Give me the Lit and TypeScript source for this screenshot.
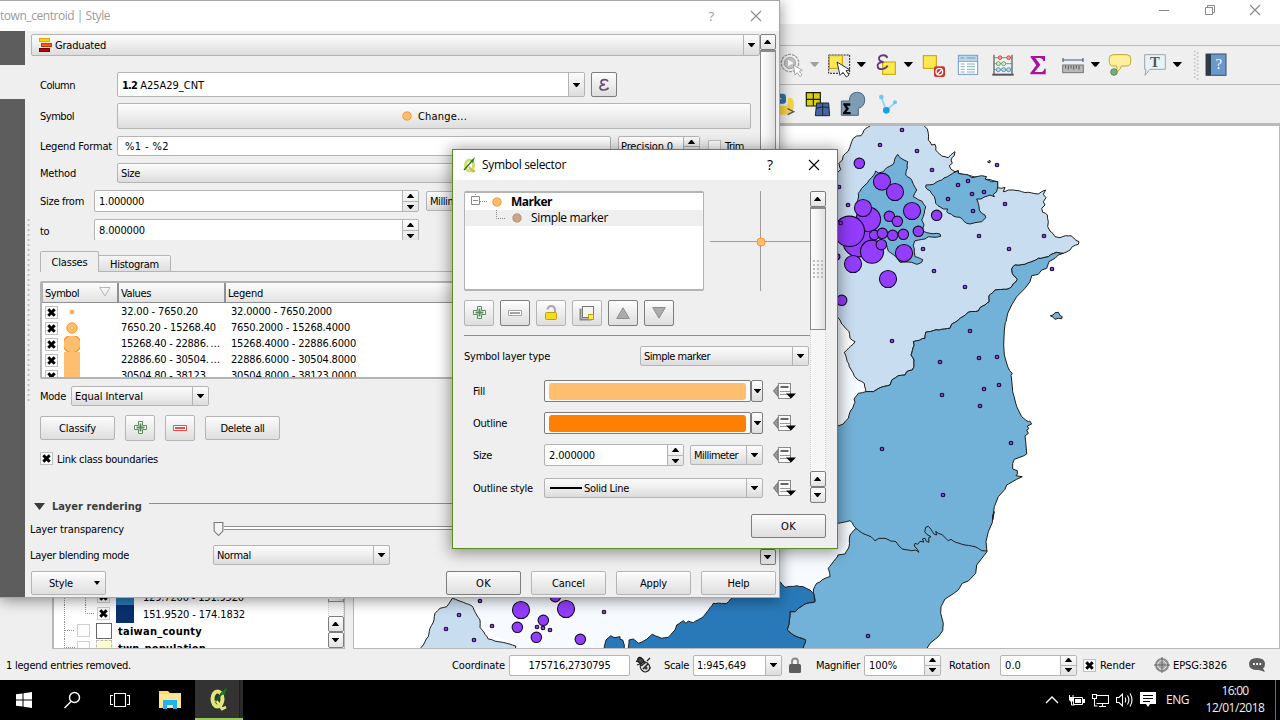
import { LitElement, html, svg, css } from "lit";
import { customElement, property } from "lit/decorators.js";

/* ---------- text that is spaced to a given width ---------- */

@customElement("fit-text")
class FitText extends LitElement {
  @property({ type: Number }) w = 0;
  static styles = css`
    :host { display: inline-block; white-space: pre; flex: none; }
  `;
  render() {
    return html`<slot></slot>`;
  }
  firstUpdated() {
    const n = (this.textContent || "").length;
    if (!this.w || !n) return;
    const r = document.createRange();
    r.selectNodeContents(this);
    const now = r.getBoundingClientRect().width;
    this.style.letterSpacing = ((this.w - now) / n).toFixed(3) + "px";
  }
}

const T = (text: string, w = 0, cls = "") => html`<fit-text class=${cls} .w=${w}>${text}</fit-text>`;

/* ---------- shared look of the controls ---------- */

const shared = css`
  * { box-sizing: border-box; }
  :host { display: block; font: 11px/14px "DejaVu Sans Condensed", "DejaVu Sans", sans-serif; font-stretch: condensed; color: #000; }
  svg { display: block; flex: none; }
  fit-text { padding-top: 2px; }
  .seg fit-text, .flat fit-text { padding-top: 0; }
  .seg { font-family: "Open Sans", "Noto Sans", sans-serif; font-stretch: normal; font-size: 12px; line-height: 16px; }
  .row { display: flex; align-items: center; flex: none; }
  .grow { flex: 1; }
  .btn { display: flex; align-items: center; justify-content: center; flex: none; border: 1px solid #b4b4b4; border-radius: 2px; background: linear-gradient(#fdfdfd, #f0f0f0 40%, #dedede); }
  .dark { border-color: #7d7d7d; }
  .push { width: 75px; height: 24px; }
  .tool { width: 30px; height: 26px; }
  .combo { display: flex; align-items: center; flex: none; height: 21px; border: 1px solid #b4b4b4; border-radius: 2px; background: linear-gradient(#fbfbfb, #efefef 45%, #dcdcdc); padding-left: 3px; }
  .combo.white { background: #fff; }
  .combo.white .drop { background: linear-gradient(#fbfbfb, #efefef 45%, #dcdcdc); }
  .drop { width: 16px; align-self: stretch; margin-left: auto; border-left: 1px solid #b4b4b4; display: flex; align-items: center; justify-content: center; }
  .field { display: flex; align-items: center; flex: none; height: 21px; border: 1px solid #b4b4b4; border-radius: 2px; background: #fff; padding-left: 4px; }
  .updown { width: 16px; align-self: stretch; margin-left: auto; border-left: 1px solid #b4b4b4; display: grid; grid-template-rows: 1fr 1fr; background: linear-gradient(#fbfbfb, #e4e4e4); }
  .updown span { display: flex; align-items: center; justify-content: center; }
  .updown span + span { border-top: 1px solid #b4b4b4; }
  .check { width: 13px; height: 13px; border: 1px solid #c0c0c0; background: #fdfdfd; flex: none; display: flex; align-items: center; justify-content: center; }
  .sb { width: 16px; display: flex; flex-direction: column; flex: none; }
  .sbb { width: 16px; height: 16px; border: 1px solid #7d7d7d; border-radius: 2px; background: linear-gradient(#fdfdfd, #e2e2e2); display: flex; align-items: center; padding-left: 3px; flex: none; }
  .sbt { border: 1px solid #8a8a8a; border-top-width: 2px; background: linear-gradient(90deg, #fdfdfd, #f2f2f2 50%, #e0e0e0); display: flex; align-items: center; justify-content: center; }
  .track { flex: 1; border: 1px dotted #cfcfcf; border-width: 0 1px; background: #f6f6f6; }
`;

const down = html`<svg width="7" height="4" viewBox="0 0 7 4"><path d="M-.3 0H7.300L4 4H3Z" /></svg>`;
const up = html`<svg width="7" height="4" viewBox="0 0 7 4"><path d="M-.3 4H7.300L4 0H3Z" /></svg>`;
const updown = html`<div class="updown"><span>${up}</span><span>${down}</span></div>`;
const drop = html`<div class="drop">${down}</div>`;
const cross = html`<svg width="9" height="9" viewBox="0 0 9 9"><path d="M1.3 1.3L7.7 7.7M7.7 1.3L1.3 7.7" stroke="#000" stroke-width="3" /></svg>`;
const check = (on: boolean) => html`<span class="check">${on ? cross : ""}</span>`;
const plusIcon = html`<svg width="16" height="16" viewBox="0 0 16 16"><path d="M6.500 1.500h4v4h4v4h-4v4h-4v-4h-4v-4h4z" fill="#fff" stroke="#5a8c5a" /><path d="M8.500 3.500v8M4.500 7.500h8" stroke="#5a8c5a" stroke-width="2" /></svg>`;
const minusIcon = (c: string) => html`<svg width="16" height="16" viewBox="0 0 16 16"><path d="M1.500 5.500h13v5h-13z" fill="#fff" stroke=${c} /><path d="M3 8h10" stroke=${c} stroke-width="2" /></svg>`;
const dot = (r: number, fill = "#fdbe6f", stroke = "#ff9428") =>
  html`<svg width="16" height="16" viewBox="0 0 16 16"><circle cx="8" cy="8" r=${r} fill=${fill} stroke=${stroke} /></svg>`;
const closeX = (c: string) => html`<svg width="12" height="12" viewBox="0 0 12 12"><path d="M1 1L11 11M11 1L1 11" stroke=${c} stroke-width="1.1" /></svg>`;

/* ---------- map ---------- */

type Pt = [number, number];
/* a traced run of points, three units to the pixel, from the origin (ox, oy) */
const run = (ox: number, oy: number, s: string): Pt[] =>
  s.trim().split(/\s+/).map((p) => {
    const [a, b] = p.split(",").map(Number);
    return [ox + a / 3, oy + b / 3] as Pt;
  });
const A = (s: string) => run(825, 125, s);
const B = (s: string) => run(825, 320, s);
const C = (s: string) => run(825, 500, s);
const D = (s: string) => run(420, 540, s);

/* breaks long edges up so that borders look surveyed, not ruled; depends on place only */
const noise = (x: number, y: number) => {
  const v = Math.sin(x * 12.9898 + y * 78.233) * 43758.5453;
  return v - Math.floor(v) - 0.5;
};
const rough = (pts: Pt[], amp: number): Pt[] => {
  const out: Pt[] = [];
  pts.forEach((p, i) => {
    out.push(p);
    const q = pts[i + 1];
    if (!q) return;
    const len = Math.hypot(q[0] - p[0], q[1] - p[1]);
    const n = Math.floor(len / 2.6);
    for (let k = 1; k < n; k++) {
      const x = p[0] + ((q[0] - p[0]) * k) / n;
      const y = p[1] + ((q[1] - p[1]) * k) / n;
      const kx = Math.round(x * 10), ky = Math.round(y * 10);
      out.push([x + noise(kx, ky) * amp, y + noise(ky, kx) * amp]);
    }
  });
  return out;
};
const str = (p: Pt[]) => p.map(([x, y]) => x.toFixed(1) + "," + y.toFixed(1)).join(" ");

const newTaipei = [
  ...rough(A("0,140 38,142 47,134 42,115 52,105 55,92 70,78 74,68 80,50 85,40 95,33 108,32 118,14 128,7 135,3 135,-6 298,-6 298,3 307,12 310,25 310,45 320,60 330,58 333,68 332,75 350,93 370,98 377,90 390,80 388,92 378,105 382,115 373,122 378,133 390,140 400,137 400,145 518,170 518,188 530,190 540,187 535,200 550,195 565,195 590,200 610,202 640,207 650,200 662,195 655,208 663,218 655,230 660,240 650,250 653,262 667,270 670,290 668,305 675,318 690,335 705,338 722,332 738,332 752,345 762,350 760,358 742,365 735,375 715,385"), 1),
  ...rough(A("715,385 695,382 670,395 660,397 640,400 625,408 600,418 570,420 560,432 562,445 577,463 560,485 545,493 510,495 492,512 493,530 480,540 465,548 460,558 430,562 400,585 392,591"), 1.2),
  ...rough(B("392,6 380,12 375,25 350,28 302,37 300,55 265,65 268,75 258,105 267,120 267,140 262,150 245,155 240,165 220,167 200,180 195,195 165,203 145,215 122,215 118,190 92,173 73,140 58,97 90,65 75,55 72,35 50,12 45,0 38,-8 0,-8"), 1.1),
];
const hualien = [
  ...A("715,385 700,390 690,400 672,410 665,430 650,435 640,448 620,452 615,470 600,490 575,515 560,540 548,565 543,590"),
  ...B("541,8 538,30 536,75 538,105 548,140 554,152 562,160 558,166 560,180 563,215 575,260 590,290 602,300 610,305 614,303 620,312 607,318 611,326 605,330 610,340 600,348 602,365 605,402 595,408 568,418 563,430 563,447 577,452 577,462 573,467 592,470 575,478 545,495 540,508 520,530 508,560 503,600"),
  ...C("508,35 503,45 502,68 490,95 483,125 486,155 455,195 452,220 430,243 412,250 400,270 385,281 360,297 348,320 347,340 355,370 353,392 340,410 315,430 303,450"),
  ...D("1150,340"),
  ...rough(D("1150,324 1157,300 1130,290 1102,270 1108,240 1110,215 1125,215 1135,205 1160,190 1185,185 1180,150 1190,130 1215,115 1230,110 1225,85 1240,65 1254,48"), 0.9),
  ...rough(C("38,165 60,162 72,140 75,105 93,85 75,62 38,70 0,60"), 0.9),
  ...rough(B("0,318 38,318 55,312 70,295 78,270 90,247 87,237 100,220 122,215 145,215 165,203 195,195 200,180 220,167 240,165 245,155 262,150 267,140 267,120 258,105 268,75 265,65 300,55 302,37 350,28 375,25 380,12 392,6"), 1.1),
  ...rough(A("392,591 400,585 430,562 460,558 465,548 480,540 493,530 492,512 510,495 545,493 560,485 577,463 562,445 560,432 570,420 600,418 625,408 640,400 660,397 670,395 695,382 715,385"), 1.2),
];
const divider = rough(C("93,85 110,98 125,105 138,110 150,122 162,115 180,115 197,123 213,125 222,138 232,147 243,149 260,152 272,150 282,157 277,148 268,138 270,130 278,133 285,124 297,126 292,117 300,115 304,124 312,127 311,113 318,110 305,103 299,95 302,82 310,79 318,88 328,103 335,105 332,94 340,100 352,104 370,122 378,118 392,127 420,135 450,140 470,152 486,153"), 0.4);
const keelung = rough(A("400,137 400,145 418,148 430,150 440,158 470,152 485,155 480,162 500,170 518,170 518,185 515,200 505,208 508,215 495,210 480,215 468,222 455,222 460,235 463,255 470,265 480,270 482,278 470,290 450,293 435,297 425,295 405,277 385,273 365,260 368,252 355,252 332,235 328,215 315,197 302,187 303,180 325,178 350,165 375,150 400,137"), 1);
const taipei = rough(A("218,88 228,100 248,110 247,130 242,150 260,165 265,178 275,195 265,215 290,228 302,245 298,265 290,285 297,300 293,318 315,325 345,327 347,334 330,337 310,335 300,342 270,347 265,362 268,380 270,395 293,404 290,412 275,418 260,412 225,412 218,402 190,378 185,360 150,330 130,300 125,260 98,235 100,205 110,190 120,180 145,152 152,138 160,144 175,140 185,128 205,118 210,100 218,88"), 1.1);
const west = rough(D("97,175 130,187 155,197 170,225 180,240 180,262 205,297 235,305 260,310 287,318 288,340 -10,340 4,322 15,305 25,290 30,265 42,240 45,220 60,205 80,200 97,175"), 0.7);
const taichung = [
  ...rough(D("625,340 625,325 627,300 640,297 655,310 680,298 697,283 725,295 745,292 765,270 770,255 790,242 798,250 805,243 820,248 850,230 880,190 920,190 940,170 1000,130 1080,125 1095,142 1130,137 1150,140 1170,150 1182,162 1185,185"), 0.7),
  ...rough(D("1185,185 1160,190 1135,205 1125,215 1110,215 1108,240 1102,270 1130,290 1157,300 1150,324"), 0.9),
  ...D("1150,340"),
];
const blob = D("553,340 553,320 558,300 572,287 582,293 600,290 600,298 608,300 613,315 612,340");
const islet = A("676,572 684,570 690,563 700,562 706,572 712,575 710,581 700,580 690,583 685,577");
const land = [...D("97,175 180,262 288,318 288,345"), ...D("1160,345 1200,130"), ...C("93,85"), ...B("130,215 60,90 40,-8"), ...D("100,0")];

const towns = [
  ...A("231,15 165,60 276,78 321,135 42,186 69,240 516,120 429,168 399,180 441,207 477,201 369,222 444,258 540,237 462,333 657,333 552,372 294,372 327,438 420,486 681,432"),
  ...B("201,63 435,33 345,126 462,114 516,111 522,195 477,207 351,225 465,258 558,369 171,387 354,525"),
  ...C("129,408"),
  ...D("180,183 117,225 78,267 216,258 162,300 552,216 351,261 369,264 390,270"),
];
/* x, y, radius */
const cities: number[][] = [
  [103, 115, 16], [100, 350, 46], [130, 283, 37], [148, 330, 15], [171, 170, 26], [210, 201, 26], [73, 319, 46], [114, 249, 26],
  [261, 258, 26], [335, 271, 16], [193, 274, 16], [217, 289, 16], [172, 325, 16], [203, 331, 16], [235, 328, 16], [280, 319, 16],
  [141, 380, 35], [169, 359, 16], [237, 384, 26], [84, 417, 26], [189, 462, 26], [50, 526, 16], [36, 395, 9], [47, 294, 5.5],
].map(([x, y, r]) => [825 + x / 3, 125 + y / 3, r / 3]).concat(
  [[303, 210, 26], [438, 207, 26], [406, 170, 16], [370, 241, 16], [292, 262, 16], [349, 292, 16], [481, 298, 16]].map(([x, y, r]) => [420 + x / 3, 540 + y / 3, r / 3])
);

@customElement("map-canvas")
class MapCanvas extends LitElement {
  static styles = [shared, css`
    .map { border: 1px solid #b9b9b9; background: #fff; height: 524px; width: 927px; overflow: hidden; }
    .edge { stroke: #1c1c1c; stroke-width: 1; stroke-linejoin: round; }
    .pt { fill: #943cff; stroke: #140c24; stroke-width: 1.1; }
  `];
  render() {
    const poly = (p: Pt[], fill: string) => svg`<polygon class="edge" points=${str(p)} fill=${fill} />`;
    return html`<div class="map"><svg width="925" height="522" viewBox="354 126 925 522">
      <polygon points=${str(land)} fill="#f7fbff" />
      ${poly(newTaipei, "#c9ddf0")} ${poly(hualien, "#73b2d8")} ${poly(taipei, "#73b2d8")} ${poly(keelung, "#73b2d8")}
      ${poly(taichung, "#2979b9")} ${poly(west, "#c9ddf0")} ${poly(blob, "#2979b9")} ${poly(islet, "#73b2d8")}
      <polyline class="edge" points=${str(divider)} fill="none" />
      <path d="M987.500 162l1.500-1.500 1.500 0.500-1 2z" class="edge" fill="#73b2d8" />
      ${cities.map(([x, y, r]) => svg`<circle class="pt" cx=${x} cy=${y} r=${r - 0.1} />`)}
      ${towns.map(([x, y]) => svg`<circle class="pt" cx=${x} cy=${y} r="1.8" />`)}
    </svg></div>`;
  }
}

/* ---------- main window ---------- */

/* toolbar drawings share one sheet, three units to the pixel, with x counted from pixel 760 */
const sheet = (x0: number, x1: number, top: number, body: unknown) =>
  html`<svg width=${x1 - x0} height="38" viewBox="${(x0 - 760) * 3} ${top} ${(x1 - x0) * 3} 114">${body}</svg>`;
const t1 = (x0: number, x1: number, body: unknown) => sheet(x0, x1, 138, body);
const t2 = (x0: number, x1: number, body: unknown) => sheet(x0, x1, 255, body);
const tri = (x: number, c = "#000") => svg`<path d="M${x - 14} 186H${x + 14}L${x + 2} 200H${x - 2}Z" fill=${c} />`;

@customElement("main-window")
class MainWindow extends LitElement {
  static styles = [shared, css`
    .win { height: 680px; background: #efefef; display: flex; flex-direction: column; }
    .title { height: 24px; background: #fff; display: flex; justify-content: flex-end; padding: 4px 19px 0 0; gap: 33px; flex: none; }
    .menu { height: 22px; border-bottom: 1px solid #b9b9b9; flex: none; }
    .bar { height: 39px; border-bottom: 1px solid #b9b9b9; padding-left: 778px; display: flex; flex: none; overflow: hidden; }
    .bar2 { height: 40px; border-bottom: 2px solid #b9b9b9; }
    .serif { font: bold 38px "Liberation Serif", serif; }
    .tee { font-size: 44px; }
    .quest { font-size: 44px; font-weight: normal; }
    .work { display: flex; flex: none; height: 525px; }
    .left { width: 293px; margin-left: 52px; height: 524px; border: 1px solid #b9b9b9; border-left: 2px solid #b9b9b9; background: #fff; display: flex; overflow: hidden; }
    .tree { flex: 1; padding-top: 462px; height: 522px; overflow: hidden; }
    .leaf { display: flex; align-items: center; height: 17px; flex: none; }
    .leaf .check { border-color: #d0d0d0; }
    .b { font-weight: bold; }
    .sw { width: 18px; height: 18px; margin: 0 9px 0 6px; flex: none; border-top: 1px solid #08306b; }
    .s1 { background: #2979b9; } .s2 { background: #08306b; }
    .sw2 { width: 16px; height: 16px; margin: 0 6px; flex: none; border: 1px solid #666; background: #fff; }
    .sw3 { background: #ffffcc; border: 1px dashed #bbb; }
    .side { padding-top: 473px; height: 522px; }
    .side .sbt { height: 3px; flex: none; border-top: 0; }
    .map { margin-left: 8px; }
    .status { flex: none; height: 30px; padding-left: 6px; display: grid; align-items: center; grid-template-columns: 446px 57px 126px 29px 29px 96px 27px 48px 85px 51px 83px 17px 54px 19px 76px 31px; }
    .w121 { width: 121px; justify-content: center; padding: 0; } .w90 { width: 89px; } .w78 { width: 77px; }
  `];
  render() {
    const line = (p: string, w = 25) => html`<svg width=${w} height="17" viewBox="0 0 ${w} 17"><path d=${p} stroke="#8f8f8f" stroke-dasharray="1 1" fill="none" /></svg>`;
    return html`<div class="win">
      <div class="title">
        <svg width="14" height="12" viewBox="0 0 14 12"><path d="M2 6.500h10" stroke="#888" /></svg>
        <svg width="12" height="12" viewBox="0 0 12 12"><path d="M1.500 3.500h7v7h-7zM3.500 3.500v-2h7v7h-2" stroke="#888" fill="none" /></svg>
        ${closeX("#888")}
      </div>
      <div class="menu"></div>
      <div class="bar">
        ${t1(778, 806, svg`<circle cx="90" cy="189" r="26" fill="#f5f5f5" stroke="#999" stroke-width="4" stroke-dasharray="9 2.600" /><circle cx="90" cy="189" r="17" fill="#c4c4c4" stroke="#999" stroke-width="2.500" /><path d="M84 179v20l16-10z" fill="#fff" /><path d="M100 195l5 30 7-7 8 12 6-5-8-11 9-3z" fill="#fff" stroke="#999" stroke-width="2.500" />`)}
        ${t1(806, 824, tri(164, "#a0a0a0"))}
        ${t1(824, 852, svg`<rect x="206" y="165" width="63" height="55" fill="#e4e4e4" stroke="#222" stroke-width="3" stroke-dasharray="6 3" /><rect x="208" y="167" width="39" height="38" fill="#fce94f" stroke="#c4a000" stroke-width="3" /><path d="M231 186l9 40 9-9 10 14 8-6-9-13 12-2z" fill="#fff" stroke="#333" stroke-width="3" />`)}
        ${t1(852, 872, tri(304))}
        ${t1(872, 899, svg`<rect x="368" y="186" width="38" height="37" fill="#fce94f" stroke="#c4a000" stroke-width="3" /><path d="M382 174C379 162 357 164 357 175C357 183 364 186 371 186C358 186 351 192 353 200C356 211 376 210 383 197" stroke="#5f3a72" stroke-width="5.500" fill="none" />`)}
        ${t1(899, 919, tri(445))}
        ${t1(919, 951, svg`<rect x="490" y="167" width="39" height="38" fill="#fce94f" stroke="#c4a000" stroke-width="3" /><rect x="522" y="199" width="33" height="32" rx="6" fill="#cf3030" /><circle cx="538" cy="215" r="10" fill="none" stroke="#fff" stroke-width="4" /><path d="M532 222l13-13" stroke="#fff" stroke-width="4" />`)}
        ${t1(951, 985, svg`<rect x="595" y="166" width="58" height="57" fill="#fff" stroke="#6f9ac4" stroke-width="3" /><path d="M597 168h54v14h-54z" fill="#b8d4ee" /><path d="M596 184h56M602 174h10M620 174h26" stroke="#6f9ac4" stroke-width="3" /><path d="M602 192h12M602 200h12M602 208h12M602 216h12M621 192h24M621 200h24M621 208h24M621 216h24" stroke="#6f9ac4" stroke-width="2.500" />`)}
        ${t1(985, 1020, svg`<path d="M702 164v58M756 164v58" stroke="#666" stroke-width="4" /><path d="M697 224h64" stroke="#555" stroke-width="6" /><path d="M702 173h54M702 191h54M702 209h54" stroke="#777" stroke-width="2.500" /><g stroke-width="2.500"><g fill="#f6a0a0" stroke="#c33"><circle cx="720" cy="173" r="5.500" /><circle cx="746" cy="173" r="5.500" /></g><g fill="#c8ecc8" stroke="#5a9c5a"><circle cx="715" cy="191" r="6" /><circle cx="731" cy="191" r="6" /></g><g fill="#bcdcf2" stroke="#4a80ac"><circle cx="715" cy="209" r="6" /><circle cx="731" cy="209" r="6" /><circle cx="746" cy="209" r="6" /></g></g>`)}
        ${t1(1020, 1055, svg`<path d="M812 168H855V183H850Q848 174 838 174H826L841 194L824 216H842Q851 216 853 206H857V223H811V219L829 196L812 172Z" fill="#a8129f" />`)}
        ${t1(1055, 1086, svg`<path d="M909 180h60M909 174v12M969 174v12" stroke="#3c5f86" stroke-width="3.500" /><rect x="908" y="195" width="62" height="23" fill="#b8b8b8" stroke="#777" stroke-width="3" /><path d="M917 197v9M925 197v12M933 197v9M941 197v12M949 197v9M957 197v12" stroke="#444" stroke-width="2.500" />`)}
        ${t1(1086, 1105, tri(1006))}
        ${t1(1105, 1138, svg`<path d="M1060 164h40q12 0 12 11v10q0 13-12 13h-16q-4 16-18 18q8-10 4-18h-10q-12 0-12-13v-10q0-11 12-11z" fill="#fcf09a" stroke="#c4a52a" stroke-width="3" /><circle cx="1062" cy="216" r="10" fill="#7cab7c" stroke="#4d7f4d" stroke-width="2.500" />`)}
        ${t1(1138, 1168, svg`<path d="M1154 164h62v44h-46l-15 18 3-18h-4z" fill="#eaf2f5" stroke="#9aa6ab" stroke-width="3" /><text class="serif tee" x="1185" y="201" text-anchor="middle" fill="#555">T</text>`)}
        ${t1(1168, 1190, tri(1252))}
        ${t1(1190, 1202, svg`<path d="M1304 152V240M1313 157V240" stroke="#c4c4c4" stroke-width="5" stroke-dasharray="5 6" />`)}
        ${t1(1202, 1232, svg`<rect x="1338" y="162" width="60" height="64" fill="#6b98cb" stroke="#3b4f66" stroke-width="3" /><rect x="1338" y="162" width="15" height="64" fill="#2c3a4a" /><text class="serif quest" x="1376" y="208" text-anchor="middle" fill="#fff">?</text>`)}
      </div>
      <div class="bar bar2">
        ${t2(778, 802, svg`<path d="M54 281h14q10 0 10 10v12q0 8-8 8H54z" fill="#3572a5" /><path d="M64 296h-10" stroke="#fff" stroke-width="3" /><path d="M54 345V318h22q8-1 8-9v-16h8q10 3 10 20t-6 20l-8 10z" fill="#f9d648" /><path d="M83 326l18 9-18 9" stroke="#555" stroke-width="4" fill="none" />`)}
        ${t2(802, 836, svg`<path d="M139 278h42v40h-42zM160 278v40M139 298h42" fill="#d8cf0a" stroke="#1c1c00" stroke-width="3.500" /><path d="M170 309h36l3 38h-43z" fill="#46659e" stroke="#182440" stroke-width="3" /><path d="M188 309v38M168 325q18-8 39-2" stroke="#182440" stroke-width="3" fill="none" />`)}
        ${t2(836, 871, svg`<path d="M244 303h24q0-26 25-26 21 2 21 23 0 20-19 25v21h-51z" fill="#7e9db3" stroke="#4a6880" stroke-width="3" /><path d="M250 310H271V317H260L267 326L259 336H272V343H249V338L258 326L250 315Z" fill="#000" />`)}
        ${t2(871, 905, svg`<path d="M364 292L379 331L406 308" stroke="#8fd3f2" stroke-width="5" fill="none" /><circle cx="379" cy="331" r="10" fill="#159fe4" /><circle cx="364" cy="291" r="7" fill="#6cc7f0" /><circle cx="405" cy="307" r="6" fill="#6cc7f0" />`)}
      </div>
      <div class="work">
        <div class="left">
          <div class="tree">
            <div class="leaf">${line("M10.500 0V17")}<svg width="18" height="17"><path d="M6.500 0V17" stroke="#8f8f8f" stroke-dasharray="1 1" /></svg>${check(true)}<span class="sw s1"></span>${T("129.7200 - 151.9520", 101)}</div>
            <div class="leaf">${line("M10.500 0V17")}<svg width="18" height="17"><path d="M6.500 0V8.500H16" stroke="#8f8f8f" stroke-dasharray="1 1" fill="none" /></svg>${check(true)}<span class="sw s2"></span>${T("151.9520 - 174.1832", 102)}</div>
            <div class="leaf b">${line("M10.500 0V17M11 8.500H21", 23)}${check(false)}<span class="sw2"></span>${T("taiwan_county", 84)}</div>
            <div class="leaf b">${line("M10.500 0V8.500H21", 23)}${check(false)}<span class="sw2 sw3"></span>${T("twn_population", 88)}</div>
          </div>
          <div class="sb side"><div class="sbt"></div><div class="track"></div><div class="sbb">${up}</div><div class="sbb">${down}</div></div>
        </div>
        <map-canvas class="map"></map-canvas>
      </div>
      <div class="status">
        ${T("1 legend entries removed.", 125)} ${T("Coordinate", 53)}
        <div class="field w121">${T("175716,2730795", 82)}</div>
        <svg width="18" height="18" viewBox="0 0 18 18"><path d="M3 2l3 2M1 5l4 1M2 9l3-1M15 2l-3 3M16 12l-3-1" stroke="#222" stroke-width="1.300" /><ellipse cx="6" cy="5" rx="2.500" ry="4" transform="rotate(-40 6 5)" fill="#444" stroke="#111" /><ellipse cx="10" cy="11" rx="4.500" ry="5" fill="#ddd" stroke="#222" stroke-width="1.300" transform="rotate(-40 10 11)" /><path d="M6 10l5-4M8 13l5-5" stroke="#222" stroke-width="1.500" /><circle cx="11" cy="12" r="1.500" fill="#333" /></svg>
        ${T("Scale", 25)} <div class="combo white w90">${T("1:945,649", 49)}${drop}</div>
        <svg width="12" height="16" viewBox="0 0 12 16"><path d="M3 8V4.500q0-3 3-3t3 3V8" stroke="#888" stroke-width="1.800" fill="none" /><rect y="7" width="12" height="9" rx="1.500" fill="#5c5c5c" /></svg>
        ${T("Magnifier", 44)} <div class="field w78">${T("100%", 28)}${updown}</div>
        ${T("Rotation", 41)} <div class="field w78">${T("0.0", 16)}${updown}</div>
        ${check(true)} ${T("Render", 35)}
        <svg width="16" height="16" viewBox="0 0 16 16"><circle cx="8" cy="8" r="7" fill="#8a8a8a" /><circle cx="8" cy="8" r="4.500" fill="#aaa" stroke="#eee" /><path d="M8 0v16M0 8h16" stroke="#666" /></svg>
        ${T("EPSG:3826", 54)}
        <svg width="16" height="16" viewBox="0 0 16 16"><path d="M8 1q8 0 8 6 0 3-2 4.500l2 3.500-6-2q-10 .5-10-6 0-6 8-6z" fill="#5d5d5d" /><path d="M4 7h1.800M7.200 7H9M10.400 7h1.800" stroke="#fff" stroke-width="1.800" /></svg>
      </div>
    </div>`;
  }
}

/* ---------- layer style window ---------- */

@customElement("style-window")
class StyleWindow extends LitElement {
  static styles = [shared, css`
    .win { width: 780px; height: 598px; border: solid #a6a6a6; border-width: 1px 1px 1px 0; background: #efefef; box-shadow: 0 2px 14px rgba(0, 0, 0, 0.45); display: flex; flex-direction: column; }
    .title { height: 30px; flex: none; background: #fff; color: #9b9b9b; display: flex; align-items: center; padding-right: 17px; }
    .q { margin-right: 36px; font-size: 13px; }
    .body { flex: 1; display: flex; min-height: 0; }
    .nav { width: 25px; background: #5d5d5d; padding-top: 34px; flex: none; }
    .sel { height: 34px; background: #efefef; }
    .grip { width: 6px; padding: 188px 0 0 2px; flex: none; }
    .main { flex: 1; }
    .area { display: flex; height: 534px; padding-top: 3px; }
    .form { width: 729px; display: flex; flex-direction: column; height: 532px; }
    .in { padding-left: 9px; }
    .lab { width: 77px; flex: none; } .lab54 { width: 54px; flex: none; }
    .full { width: 729px; height: 22px; padding-left: 5px; gap: 2px; }
    .r1 { margin-top: 16px; height: 25px; } .r1 .combo { width: 468px; height: 25px; padding-left: 4px; } .eps { width: 26px; height: 25px; margin-left: 6px; }
    .r2 { margin-top: 6px; height: 26px; } .wide { width: 634px; height: 26px; gap: 3px; padding-right: 2px; }
    .r3 { margin-top: 7px; height: 20px; } .r3 .field { height: 20px; } .lf { width: 494px; padding-left: 7px; } .pr { width: 82px; margin-left: 7px; padding-left: 2px; } .trim { gap: 4px; margin-left: 8px; }
    .r4 { margin-top: 7px; height: 20px; } .wm { width: 634px; height: 20px; }
    .r5 { margin-top: 7px; height: 22px; } .spin { width: 325px; height: 22px; } .mm { width: 80px; height: 20px; margin-left: 7px; }
    .r6 { height: 21px; overflow: hidden; align-items: flex-start; }
    .r6 .lab54 { padding-top: 4px; }
    .tabs { margin: 11px 0 0 9px; height: 21px; display: flex; align-items: flex-end; flex: none; }
    .tab { border: 1px solid #b4b4b4; height: 17px; width: 72px; border-radius: 0 2px 0 0; border-left: 0; background: linear-gradient(#f6f6f6, #dedede); display: flex; align-items: center; justify-content: center; }
    .on { height: 21px; width: 59px; background: #efefef; border-left: 1px solid #b4b4b4; border-bottom: 0; border-radius: 2px 2px 0 0; }
    .rest { flex: 1; border-bottom: 1px solid #b4b4b4; align-self: stretch; }
    .table { margin: 9px 0 0 9px; height: 98px; flex: none; border: 1px solid #b4b4b4; border-width: 2px; border-radius: 2px; background: #fff; overflow: hidden; }
    .head, .rec { display: grid; grid-template-columns: 75px 107px 1fr; }
    .head { height: 20px; border-bottom: 1px solid #8f8f8f; }
    .head > div { background: linear-gradient(#fdfdfd, #e2e2e2); border-left: 2px solid #909090; display: flex; align-items: center; padding-left: 2px; }
    .head > div:first-child { border-left: 1px solid #b0b0b0; }
    .sort { margin: -3px 0 0 20px; }
    .rec { height: 16px; }
    .rec > div { display: flex; align-items: center; height: 16px; }
    .sy { gap: 6px; padding: 2px 0 0 3px; } .va { padding-left: 4px; } .le { padding-left: 7px; }
    .block { width: 16px; height: 16px; background: #fdbe6f; }
    .mode { margin-top: 7px; height: 20px; } .mode .lab { width: 31px; } .mode .combo { width: 138px; height: 20px; }
    .acts { margin-top: 9px; height: 26px; gap: 10px; }
    .link { margin-top: 10px; height: 15px; gap: 4px; }
    .sec { margin-top: 33px; height: 14px; font-weight: bold; color: #3c3c3c; }
    .sec svg { margin: 0 7px 0 3px; } .sec i { flex: 1; height: 1px; background: #8f8f8f; margin: -6px 0 0 7px; }
    .tr { margin-top: 7px; height: 18px; } .lab182 { width: 183px; margin-left: -1px; flex: none; }
    .groove { flex: 1; height: 4px; border: 1px solid #8f8f8f; border-width: 1px 0; background: #fff; margin-top: -2px; }
    .bl { margin-top: 7px; height: 20px; } .bl .combo { width: 177px; height: 20px; }
    .area .sb { height: 531px; } .area .sbt { flex: 1; border-bottom: 1px solid #8a8a8a; }
    .foot { display: flex; align-items: center; height: 24px; margin-top: 6px; gap: 10px; }
    .sty { margin-right: 330px; justify-content: flex-start; padding-left: 17px; gap: 21px; }
  `];
  render() {
    const round = html`<svg width="16" height="16" viewBox="0 0 16 16"><circle cx="8" cy="8" r="8.800" fill="#fdbe6f" stroke="#ff9428" stroke-width="1.200" /></svg>`;
    const sq = html`<span class="block"></span>`;
    const recs: [unknown, string, number, string, number][] = [
      [dot(1.8), "32.00 - 7650.20", 77, "32.0000 - 7650.2000", 101],
      [dot(5.2), "7650.20 - 15268.40", 95, "7650.2000 - 15268.4000", 119],
      [round, "15268.40 - 22886.\u2009…", 99, "15268.4000 - 22886.6000", 125],
      [sq, "22886.60 - 30504.\u2009…", 99, "22886.6000 - 30504.8000", 125],
      [sq, "30504.80 - 38123.\u2009…", 99, "30504.8000 - 38123.0000", 125],
    ];
    return html`<div class="win">
      <div class="title seg">${T("town_centroid | Style", 110)}<span class="grow"></span><span class="q">?</span>${closeX("#8c8c8c")}</div>
      <div class="body">
        <div class="nav"><div class="sel"></div></div>
        <div class="grip"><svg width="3" height="184"><path d="M1.500 0V184" stroke="#c0c0c0" stroke-width="2" stroke-dasharray="2 3" /></svg></div>
        <div class="main">
          <div class="area">
            <div class="form">
              <div class="combo full">
                <svg width="16" height="16" viewBox="0 0 16 16"><rect x="2.500" y="1.500" width="10" height="3" fill="#ffd800" stroke="#f0a000" /><rect x="4.500" y="6.500" width="10" height="3" fill="#ff5a14" stroke="#c83800" /><rect x="2.500" y="11.500" width="10" height="3" fill="#b00c00" stroke="#700" /></svg>
                ${T("Graduated", 51)}${drop}</div>
              <div class="row in r1"><span class="lab">${T("Column", 35)}</span><div class="combo white"><b>${T("1.2", 15)}</b><span>&nbsp;</span>${T("A25A29_CNT", 64)}${drop}</div>
                <div class="btn dark eps"><svg width="12" height="14" viewBox="0 0 12 14"><path d="M10 3.500C9 .8 3.500 1 3 3.800C2.800 6 5 6.600 7 6.600C4 6.600 1.800 7.700 2 9.800C2.500 12.800 9 12.700 10.500 9.700" stroke="#6a4a78" stroke-width="1.700" fill="none" /></svg></div></div>
              <div class="row in r2"><span class="lab">${T("Symbol", 34)}</span><div class="btn wide">${dot(4.1)}${T("Change...", 49)}</div></div>
              <div class="row in r3"><span class="lab">${T("Legend Format", 72)}</span><div class="field lf">${T("%1 - %2", 44)}</div><div class="field pr">${T("Precision 0", 52)}${updown}</div><span class="row trim">${check(false)}${T("Trim", 19)}</span></div>
              <div class="row in r4"><span class="lab">${T("Method", 36)}</span><div class="combo wm">${T("Size", 19)}${drop}</div></div>
              <div class="row in r5"><span class="lab54">${T("Size from", 44)}</span><div class="field spin">${T("1.000000", 45)}${updown}</div><div class="combo mm">${T("Millimeter", 45)}${drop}</div></div>
              <div class="row in r5 r6"><span class="lab54">${T("to", 9)}</span><div class="field spin">${T("8.000000", 46)}${updown}</div></div>
              <div class="tabs"><div class="tab on">${T("Classes", 36)}</div><div class="tab">${T("Histogram", 49)}</div><div class="rest"></div></div>
              <div class="table">
                <div class="head"><div>${T("Symbol", 34)}<svg class="sort" width="12" height="12" viewBox="0 0 12 12"><path d="M.5 2.500H11L6 11z" fill="none" stroke="#b8b8b8" /></svg></div><div>${T("Values", 30)}</div><div>${T("Legend", 35)}</div></div>
                ${recs.map(([s, v, vw, l, lw]) => html`<div class="rec"><div class="sy">${check(true)}${s}</div><div class="va">${T(v, vw)}</div><div class="le">${T(l, lw)}</div></div>`)}
              </div>
              <div class="row in mode"><span class="lab">${T("Mode", 26)}</span><div class="combo">${T("Equal Interval", 68)}${drop}</div></div>
              <div class="row in acts"><div class="btn push">${T("Classify", 37)}</div><div class="btn tool">${plusIcon}</div><div class="btn tool">${minusIcon("#ee4c4c")}</div><div class="btn push">${T("Delete all", 44)}</div></div>
              <div class="row in link">${check(true)}${T("Link class boundaries", 101)}</div>
              <div class="row sec"><svg width="11" height="7" viewBox="0 0 11 7"><path d="M0 0H11L5.500 7z" fill="#3c3c3c" /></svg>${T("Layer rendering", 90)}<i></i></div>
              <div class="row tr"><span class="lab182">${T("Layer transparency", 94)}</span><svg width="11" height="16" viewBox="0 0 11 16"><path d="M1.500 1.500h8v8.500l-4 4.500-4-4.500z" transform="translate(-.5 0) scale(1.090 1)" fill="#f4f4f4" stroke="#777" /></svg><div class="groove"></div></div>
              <div class="row bl"><span class="lab182">${T("Layer blending mode", 99)}</span><div class="combo">${T("Normal", 34)}${drop}</div></div>
            </div>
            <div class="sb"><div class="sbb">${up}</div><div class="sbt"></div><div class="sbb">${down}</div></div>
          </div>
          <div class="foot">
            <div class="btn push sty">${T("Style", 24)}<svg width="6" height="4" viewBox="0 0 6 4"><path d="M0 0h6L3 4z" /></svg></div>
            <div class="btn push dark">${T("OK", 15)}</div><div class="btn push">${T("Cancel", 33)}</div><div class="btn push">${T("Apply", 27)}</div><div class="btn push">${T("Help", 22)}</div>
          </div>
        </div>
      </div>
    </div>`;
  }
}

/* ---------- symbol selector window ---------- */

@customElement("symbol-window")
class SymbolWindow extends LitElement {
  static styles = [shared, css`
    .win { width: 386px; height: 400px; border: 1px solid #5a8f1f; background: #efefef; box-shadow: 0 2px 14px 2px rgba(0, 0, 0, 0.4); display: flex; flex-direction: column; }
    .title { height: 30px; flex: none; background: #fff; display: flex; align-items: center; padding: 0 17px 0 9px; gap: 5px; }
    .q { margin-right: 30px; font-size: 14px; }
    .body { display: flex; padding: 11px 0 0 11px; height: 323px; flex: none; }
    .col { width: 346px; display: flex; flex-direction: column; }
    .top { display: flex; gap: 6px; flex: none; height: 100px; }
    .tree { width: 240px; border: 1px solid #b4b4b4; border-width: 2px 1px; border-radius: 2px; background: #fff; padding-top: 1px; font-size: 12px; font-family: "Open Sans", sans-serif; font-stretch: normal; }
    .n { display: flex; align-items: center; height: 16px; }
    .n b { font-weight: bold; } .n.sel { background: #efefef; padding-left: 28px; }
    .n .mk { margin-right: 6px; }
    .tools { display: flex; gap: 6px; margin-top: 9px; height: 26px; flex: none; }
    .hr { height: 1px; background: #8f8f8f; margin-top: 9px; flex: none; }
    .ty { margin-top: 10px; height: 20px; justify-content: space-between; padding-right: 1px; } .ty .combo { width: 169px; height: 20px; }
    .f { margin-top: 14px; height: 22px; padding-left: 9px; } .f + .f { margin-top: 10px; } .f + .os { margin-top: 12px; height: 20px; }
    .lab { width: 71px; flex: none; }
    .colr { width: 207px; height: 22px; padding: 2px 4px 2px 4px; background: #fafafa; } .fill { flex: 1; height: 17px; border-radius: 3px; }
    .c1 { background: #fdbe6f; } .c2 { background: #ff7f00; }
    .mini { width: 12px; height: 22px; }
    .dd { margin-left: 10px; }
    .spin { width: 140px; height: 22px; } .mm { width: 73px; height: 20px; margin-left: 6px; } .ol { width: 219px; height: 20px; padding-left: 5px; gap: 1px; }
    .sb { height: 312px; } .sbt { height: 123px; flex: none; }
    .foot { display: flex; justify-content: flex-end; padding: 11px 11px 0 0; }
  `];
  render() {
    const dd = html`<svg class="dd" width="24" height="20" viewBox="0 0 24 20"><path d="M5 4.500L.5 10L5 15.500z" fill="#999" stroke="#777" /><rect x="5.500" y="2.500" width="12" height="15" fill="#fafafa" stroke="#8a8a8a" /><path d="M7.500 6h8" stroke="#666" stroke-width="2" /><path d="M7 10.500h10M7 13.500h8" stroke="#999" /><path d="M13 12.500h10l-5 5z" fill="#000" /></svg>`;
    return html`<div class="win">
      <div class="title seg">
        <svg width="15" height="16" viewBox="0 0 15 16"><ellipse cx="7.500" cy="8.500" rx="4" ry="5.500" fill="none" stroke="#d3dd6a" stroke-width="3" /><path d="M7 10l4 4.500 2-1" stroke="#b9c94a" stroke-width="2" fill="none" /><path d="M2 13L10 4" stroke="#2d6e1e" stroke-width="1.300" /><path d="M13 0L11 6L8.500 4z" fill="#1f8a2d" /></svg>
        ${T("Symbol selector", 84)}<span class="grow"></span><span class="q">?</span>${closeX("#000")}
      </div>
      <div class="body">
        <div class="col">
          <div class="top">
            <div class="tree flat">
              <div class="n"><svg width="24" height="16" viewBox="0 0 24 16"><path d="M6.500 2.500h8v8h-8zM8 6.500h5" fill="#fff" stroke="#8a8a8a" /><path d="M10.500 0v2M15 7.500h7" stroke="#888" stroke-dasharray="1 1" /></svg>${dot(4.100)}<span class="mk"></span><b>${T("Marker", 41)}</b></div>
              <div class="n sel"><svg width="16" height="16" viewBox="0 0 16 16"><path d="M3.500 0V8.500H13" fill="none" stroke="#888" stroke-dasharray="1 1" /></svg>${dot(4.100, "#bfa88c", "#b98f66")}<span class="mk"></span>${T("Simple marker", 77)}</div>
            </div>
            <svg width="100" height="100" viewBox="0 0 100 100"><path d="M50.500 0V100M0 50.500H100" stroke="#9c9ca0" /><circle cx="51" cy="51" r="4" fill="#fdbe6f" stroke="#ff9428" /></svg>
          </div>
          <div class="tools">
            <div class="btn tool">${plusIcon}</div>
            <div class="btn tool dark">${minusIcon("#a4a4a4")}</div>
            <div class="btn tool"><svg width="16" height="18" viewBox="0 0 16 18"><path d="M4.500 5.500q.5-3.500 4-3.500 3.500.5 3.500 4V9" stroke="#a8a8a8" stroke-width="2" fill="none" /><rect x="2.500" y="8.500" width="11" height="7" rx="1" fill="#f3dc1e" stroke="#c4a000" /></svg></div>
            <div class="btn tool"><svg width="16" height="16" viewBox="0 0 16 16"><path d="M1.500 3.500v11h11" fill="none" stroke="#888" stroke-width="2" /><rect x="3.500" y="1.500" width="11" height="11" fill="#f4f4f4" stroke="#777" /><rect x="9.500" y="9.500" width="5" height="5" fill="#fce94f" stroke="#c4a000" /></svg></div>
            <div class="btn tool dark"><svg width="14" height="12" viewBox="0 0 14 12"><path d="M7 .8L13.300 11.500H.7z" fill="#ababab" stroke="#8c8c8c" /></svg></div>
            <div class="btn tool dark"><svg width="14" height="12" viewBox="0 0 14 12"><path d="M7 11.200L13.300.5H.7z" fill="#ababab" stroke="#8c8c8c" /></svg></div>
          </div>
          <div class="hr"></div>
          <div class="row ty">${T("Symbol layer type", 86)}<div class="combo">${T("Simple marker", 66)}${drop}</div></div>
          <div class="row f"><span class="lab">${T("Fill", 12)}</span><div class="btn dark colr"><div class="fill c1"></div></div><div class="btn dark mini">${down}</div>${dd}</div>
          <div class="row f"><span class="lab">${T("Outline", 34)}</span><div class="btn dark colr"><div class="fill c2"></div></div><div class="btn dark mini">${down}</div>${dd}</div>
          <div class="row f"><span class="lab">${T("Size", 19)}</span><div class="field spin">${T("2.000000", 46)}${updown}</div><div class="combo mm">${T("Millimeter", 44)}${drop}</div>${dd}</div>
          <div class="row f os"><span class="lab">${T("Outline style", 60)}</span><div class="combo ol"><svg width="33" height="2"><path d="M0 1h32" stroke="#000" stroke-width="2" /></svg>${T("Solid Line", 45)}${drop}</div>${dd}</div>
        </div>
        <div class="sb"><div class="sbb">${up}</div><div class="sbt"><svg width="12" height="19"><g stroke="#bdbdbd" stroke-width="2" stroke-dasharray="2 2"><path d="M1 1h10M1 5h10M1 9h10M1 13h10M1 17h10" /></g></svg></div><div class="track"></div><div class="sbb">${up}</div><div class="sbb">${down}</div></div>
      </div>
      <div class="foot"><div class="btn push dark">${T("OK", 15)}</div></div>
    </div>`;
  }
}

/* ---------- taskbar ---------- */

@customElement("task-bar")
class TaskBar extends LitElement {
  static styles = [shared, css`
    .bar { height: 40px; background: #000; color: #f0f0f0; display: grid; align-items: center; grid-template-columns: 48px 48px 48px 51px 48px 1fr 24px 24px 24px 24px 24px 35px 80px 5px; }
    .bar > svg { justify-self: center; }
    .app { height: 40px; background: linear-gradient(90deg, #333 44px, #1e1e1e 44px, #1e1e1e 45px, #2b2b2b 45px); border-bottom: 2px solid #96c85a; display: flex; align-items: center; justify-content: center; }
    .clock { display: flex; flex-direction: column; align-items: center; padding-bottom: 1px; gap: 1px; }
    .end { border-left: 1px solid #6a6a6a; height: 40px; }
    .lang { justify-self: center; }
  `];
  render() {
    return html`<div class="bar seg">
      <svg width="16" height="16" viewBox="0 0 16 16"><path d="M0 2.300L6.500 1.400V7.500H0zM7.500 1.200L16 0V7.500H7.500zM0 8.500H6.500V14.600L0 13.700zM7.500 8.500H16V16L7.500 14.800z" fill="#fff" /></svg>
      <svg width="18" height="18" viewBox="0 0 18 18"><circle cx="11.500" cy="6.500" r="5" fill="none" stroke="#fff" stroke-width="1.400" /><path d="M8 10.500L1.500 17" stroke="#fff" stroke-width="1.400" /></svg>
      <svg width="20" height="16" viewBox="0 0 20 16"><path d="M4.500 1.500h11v13h-11zM3 3.500H.5v9H3M17 3.500h2.500v9H17" fill="none" stroke="#fff" stroke-width="1.100" /></svg>
      <svg width="22" height="20" viewBox="0 0 22 20"><path d="M0 1h9l2 2h11v15H0z" fill="#ffd966" /><path d="M0 4h22v14H0z" fill="#ffe596" /><path d="M4 10h14v9h-4v-4H8v4H4z" fill="#1eb4f0" /></svg>
      <div class="app"><svg width="20" height="24" viewBox="0 0 20 24"><ellipse cx="8.500" cy="12" rx="5" ry="7.500" fill="none" stroke="#dfe778" stroke-width="4" /><path d="M7 13l6 9 4-2" stroke="#dfe778" stroke-width="2.600" fill="none" /><path d="M7 14L14 5" stroke="#1b5e14" stroke-width="2" /><path d="M18 .5L15.500 8L10.500 7z" fill="#1f7a1f" /></svg></div>
      <span></span>
      <svg width="14" height="8" viewBox="0 0 14 8"><path d="M1 7L7 1l6 6" stroke="#fff" stroke-width="1.300" fill="none" /></svg>
      <svg width="17" height="13" viewBox="0 0 17 13"><path d="M5.500 3.500h9v7h-9z" fill="none" stroke="#fff" /><path d="M7 5h6v4H7zM15 5h2v4h-2zM1 3h5v3l-2 2H3L1 6zM1.500 0v3M5 0v3" fill="#fff" /><path d="M1.500 1v3M5 1v3M3.500 7v4h3" stroke="#fff" fill="none" /></svg>
      <svg width="17" height="15" viewBox="0 0 17 15"><path d="M4.500 2.500h12v8h-12M10.500 10v3M7 13.500h7M.5 1.500h4v4h-4zM2.500 6v7h3" fill="none" stroke="#fff" stroke-width="1.100" /></svg>
      <svg width="17" height="16" viewBox="0 0 17 16"><path d="M.5 5.500H3L6.500 2v12L3 10.500H.5zM9 5.500q1.500 2.500 0 5M11.500 3.500q2.800 4.500 0 9M14 1.500q4 6.500 0 13" fill="none" stroke="#fff" stroke-width="1.100" /></svg>
      <svg width="16" height="16" viewBox="0 0 16 16"><path d="M0 0h16v12h-6l-2 3-2-3H0z" fill="#fff" /><path d="M3 3.500h10M3 6.500h10M3 9.500h7" stroke="#000" /></svg>
      <span class="lang">${T("ENG", 23)}</span>
      <div class="clock">${T("16:00", 27)}${T("12/01/2018", 59)}</div>
      <div class="end"></div>
    </div>`;
  }
}

/* ---------- desktop ---------- */

@customElement("app-root")
class AppRoot extends LitElement {
  static styles = css`
    :host { display: block; width: 1280px; height: 720px; overflow: hidden; position: relative; }
    .style { position: absolute; left: 0; top: 0; }
    .symbol { position: absolute; left: 452px; top: 149px; }
    .clip { position: absolute; left: 0; top: 0; width: 1280px; height: 680px; overflow: hidden; }
  `;
  render() {
    return html`
      <main-window></main-window>
      <task-bar></task-bar>
      <div class="clip">
        <style-window class="style"></style-window>
        <symbol-window class="symbol"></symbol-window>
      </div>
    `;
  }
}
